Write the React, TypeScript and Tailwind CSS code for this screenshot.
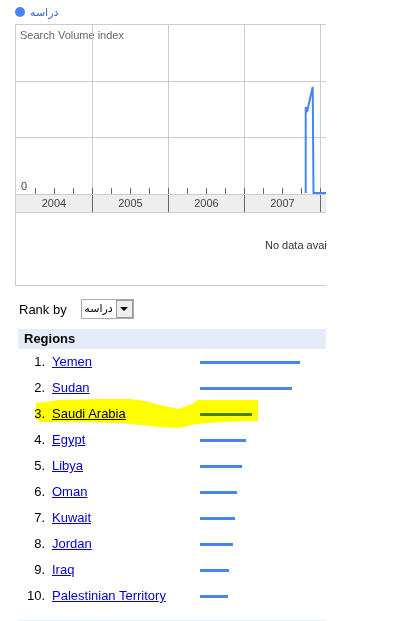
import React from "react";

const regions = [
  { name: "Yemen", w: 100 },
  { name: "Sudan", w: 92 },
  { name: "Saudi Arabia", w: 52 },
  { name: "Egypt", w: 46 },
  { name: "Libya", w: 42 },
  { name: "Oman", w: 37 },
  { name: "Kuwait", w: 35 },
  { name: "Jordan", w: 33 },
  { name: "Iraq", w: 29 },
  { name: "Palestinian Territory", w: 28 },
];

const years = ["2004", "2005", "2006", "2007"];

const Plot = () => {
  const ticks = Array.from({ length: 16 }, (_, i) => (i + 1) * 19);
  return (
    <svg width="320" height="169" className="block overflow-visible">
      <text x="4" y="14" fontSize="11" fill="#666" fontFamily="Liberation Sans, Arial, sans-serif">
        Search Volume index
      </text>
      <text x="5" y="165" fontSize="11" fill="#444" fontFamily="Liberation Sans, Arial, sans-serif">
        0
      </text>
      <line x1="0" y1="56.5" x2="320" y2="56.5" stroke="#ccc" />
      <line x1="0" y1="112.5" x2="320" y2="112.5" stroke="#ccc" />
      {[76, 152, 228, 304].map((x) => (
        <line key={x} x1={x + 0.5} y1="0" x2={x + 0.5} y2="163" stroke="#ccc" />
      ))}
      {ticks.map((x) => (
        <line key={x} x1={x + 0.5} y1="163" x2={x + 0.5} y2="169" stroke="#666" />
      ))}
      <polyline
        points="289.7,168 289.7,82 291,87 296.7,62 297.5,168 320,168"
        fill="none"
        stroke="#4684ee"
        strokeWidth="2"
      />
    </svg>
  );
};

export default function App() {
  return (
    <div className="relative w-[414px] h-[621px] overflow-hidden bg-white font-['Liberation_Sans',Arial,sans-serif]">
      <div className="w-[326px] overflow-hidden">
        {/* legend */}
        <div className="h-[24px] flex items-center pl-[15px] gap-[5px]">
          <div className="w-[10px] h-[10px] rounded-full bg-[#4684ee]" />
          <span dir="rtl" className="text-[11px] leading-none text-[#3366cc] font-['DejaVu_Sans',sans-serif]">
            دراسه
          </span>
        </div>

        {/* chart */}
        <div className="ml-[15px] w-[330px] border-l border-t border-b border-[#ccc]">
          <Plot />
          <div className="flex h-[19px] bg-[#eeeeee] border-t border-b border-[#ccc] text-[11px] text-[#444]">
            {years.map((y, i) => (
              <div
                key={y}
                className={
                  (i === 0 ? "w-[77px] " : "w-[76px] ") +
                  "shrink-0 border-r border-[#666] flex items-center justify-center"
                }
              >
                {y}
              </div>
            ))}
          </div>
          <div className="h-[72px] pl-[249px] pt-[26px] text-[11px] leading-[13px] text-[#333] whitespace-nowrap">
            No data available
          </div>
        </div>

        {/* rank by */}
        <div className="mt-[13px] ml-[19px] flex items-center gap-[14px] h-[20px]">
          <span className="text-[13px] text-black pt-px">Rank by</span>
          <div className="w-[53px] h-[20px] border border-[#a5acb2] flex bg-white">
            <div dir="rtl" className="flex-1 flex items-center pr-[3px] text-[11px] font-['DejaVu_Sans',sans-serif]">
              دراسه
            </div>
            <div className="w-[17px] h-full border border-[#999] bg-[#eeeeee] flex items-center justify-center">
              <div className="w-0 h-0 border-l-[4px] border-r-[4px] border-t-[4px] border-l-transparent border-r-transparent border-t-black" />
            </div>
          </div>
        </div>

        {/* regions */}
        <div className="mt-[10px] ml-[18px]">
          <div className="h-[20px] bg-[#e5ecf9] flex items-center pl-[6px] text-[13px] font-bold text-black">
            Regions
          </div>
          {regions.map((r, i) => (
            <div key={r.name} className="h-[26px] flex items-center text-[13px]">
              <span className="w-[27px] text-right text-black">{i + 1}.</span>
              <a href="#" className="ml-[7px] w-[148px] shrink-0 text-[#0000cc] underline">
                {r.name}
              </a>
              <div className="h-[3px] bg-[#4684ee]" style={{ width: r.w }} />
            </div>
          ))}
          <div className="mt-[11px] h-px bg-[#e5ecf9]" />
        </div>
      </div>

      {/* highlighter mark */}
      <svg
        width="270"
        height="45"
        viewBox="0 390 270 45"
        className="absolute left-0 top-[390px] mix-blend-multiply pointer-events-none"
      >
        <polygon
          fill="#ffff00"
          points="36,403 60,400 100,399 130,399 145,401 160,405 178,409 192,404 198,400 258,400 258,421 222,422 196,424 180,428 160,427 140,425 120,423 80,422 40,422 35,418"
        />
      </svg>
    </div>
  );
}
